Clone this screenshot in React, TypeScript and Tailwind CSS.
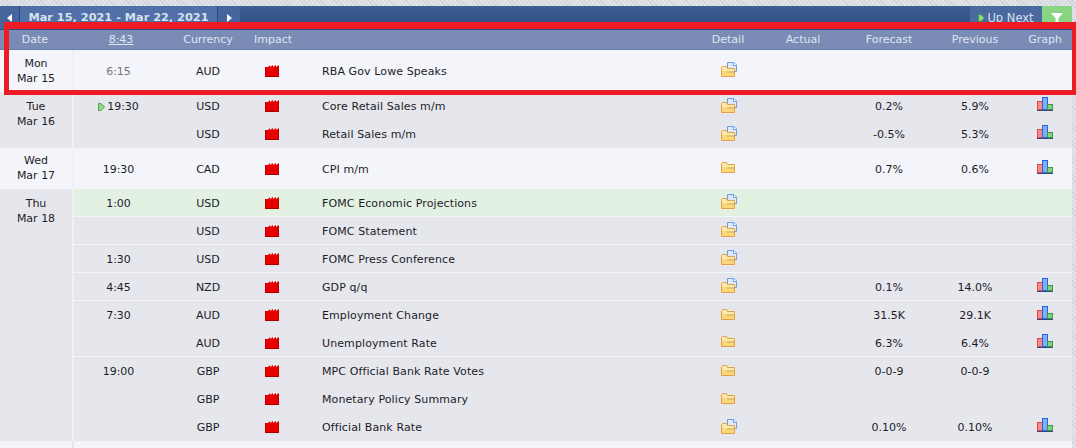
import React from 'react';

type Row = {
  time?: string;
  next?: boolean;
  muted?: boolean;
  cur: string;
  name: string;
  doc?: boolean;
  forecast?: string;
  previous?: string;
  graph?: boolean;
  line?: boolean;
  green?: boolean;
  tall?: boolean;
};

type Day = { day: string; date: string; light: boolean; pad: string; rows: Row[] };

const days: Day[] = [
  {
    day: 'Mon',
    date: 'Mar 15',
    light: true,
    pad: 'pt-[6px]',
    rows: [{ time: '6:15', muted: true, cur: 'AUD', name: 'RBA Gov Lowe Speaks', doc: true, tall: true }],
  },
  {
    day: 'Tue',
    date: 'Mar 16',
    light: false,
    pad: 'pt-[7px]',
    rows: [
      { time: '19:30', next: true, cur: 'USD', name: 'Core Retail Sales m/m', doc: true, forecast: '0.2%', previous: '5.9%', graph: true },
      { cur: 'USD', name: 'Retail Sales m/m', doc: true, forecast: '-0.5%', previous: '5.3%', graph: true },
    ],
  },
  {
    day: 'Wed',
    date: 'Mar 17',
    light: true,
    pad: 'pt-[5px]',
    rows: [{ time: '19:30', cur: 'CAD', name: 'CPI m/m', forecast: '0.7%', previous: '0.6%', graph: true, tall: true }],
  },
  {
    day: 'Thu',
    date: 'Mar 18',
    light: false,
    pad: 'pt-[7px]',
    rows: [
      { time: '1:00', cur: 'USD', name: 'FOMC Economic Projections', doc: true, green: true, line: true },
      { cur: 'USD', name: 'FOMC Statement', doc: true, line: true },
      { time: '1:30', cur: 'USD', name: 'FOMC Press Conference', doc: true, line: true },
      { time: '4:45', cur: 'NZD', name: 'GDP q/q', doc: true, forecast: '0.1%', previous: '14.0%', graph: true, line: true },
      { time: '7:30', cur: 'AUD', name: 'Employment Change', forecast: '31.5K', previous: '29.1K', graph: true },
      { cur: 'AUD', name: 'Unemployment Rate', forecast: '6.3%', previous: '6.4%', graph: true, line: true },
      { time: '19:00', cur: 'GBP', name: 'MPC Official Bank Rate Votes', forecast: '0-0-9', previous: '0-0-9' },
      { cur: 'GBP', name: 'Monetary Policy Summary' },
      { cur: 'GBP', name: 'Official Bank Rate', doc: true, forecast: '0.10%', previous: '0.10%', graph: true },
    ],
  },
];

const Impact = () => (
  <svg width="14" height="12" viewBox="0 0 14 12" className="block">
    <path d="M0 2V12H14V0L11 2V0L8 2V0L5 2V0L3 2H0Z" fill="#e60000" />
    <path d="M0 11h14v1H0z" fill="#a80000" />
    <path d="M0 2h1v10H0zM13 1h1v11h-1z" fill="#bc0000" />
  </svg>
);

const Folder = ({ doc }: { doc?: boolean }) => (
  <svg
    width="16"
    height={doc ? 15 : 11}
    viewBox={doc ? '0 0 16 15' : '0 4 16 11'}
    className="block"
  >
    {doc && (
      <>
        <path d="M6.5 .5H13L15.5 3V9.5H6.5Z" fill="#dbe8fb" stroke="#6f9fdc" />
        <path d="M12.5 .5V3.5H15.5" fill="#fff" stroke="#6f9fdc" />
      </>
    )}
    <path d="M.5 5.5V14.5H13.5V6.5H6.5L5.5 4.5H1.5Z" fill="#fbe9a8" stroke="#e3a048" />
    <path d="M1 9H13V14H1Z" fill="#f8d878" />
    <path d="M6 10h7" stroke="#d8a868" />
  </svg>
);

const Graph = () => (
  <svg width="16" height="14" viewBox="0 0 16 14" className="block">
    <rect x=".5" y="4.5" width="5" height="8" fill="#f58a8a" stroke="#e04848" />
    <rect x="5.5" y=".5" width="5" height="12" fill="#7fb0f5" stroke="#2a62e0" />
    <rect x="10.5" y="7.5" width="5" height="5" fill="#86d086" stroke="#3a9a3a" />
    <rect x="0" y="13" width="16" height="1" fill="#3a4a7a" />
  </svg>
);

const Play = ({ color = '#4aa84a' }: { color?: string }) => (
  <svg width="7" height="8" viewBox="0 0 7 8" className="block">
    <path d="M.5 .5H3L6.5 4L3 7.5H.5Z" fill="#8ed88e" stroke={color} />
  </svg>
);

function EventRow({ r }: { r: Row }) {
  const height = r.tall ? 'h-[41px]' : 'h-[28px]';
  const bg = r.green ? 'bg-[#e3f1e3]' : '';
  const line = r.line ? 'border-b border-[#f5f6fa]' : '';
  return (
    <div className={`flex items-center ${height} ${bg} ${line}`}>
      <div
        className={`flex w-[89px] items-center justify-center gap-[2px] pt-[2px] ${r.muted ? 'text-[#757575]' : 'text-[#1c1c28]'}`}
      >
        {r.next && <Play />}
        {r.time}
      </div>
      <div className="w-[90px] pt-[2px] text-center text-[#1c1c28]">{r.cur}</div>
      <div className="flex w-[38px] justify-center">
        <Impact />
      </div>
      <div className="flex-1 pl-[31px] pt-[2px] tracking-[0.1px] text-[#1c1c28]">{r.name}</div>
      <div className="flex w-[64px] justify-center pb-[2px] pl-[2px]">
        <Folder doc={r.doc} />
      </div>
      <div className="w-[86px]" />
      <div className="w-[86px] pt-[2px] text-center text-[#1c1c28]">{r.forecast}</div>
      <div className="w-[86px] pt-[2px] text-center text-[#1c1c28]">{r.previous}</div>
      <div className="flex w-[54px] justify-center pb-[4px]">{r.graph && <Graph />}</div>
    </div>
  );
}

export default function App() {
  return (
    <div
      className="relative h-[448px] w-[1076px] overflow-hidden bg-[repeating-linear-gradient(45deg,#cfd2d8_0px,#cfd2d8_1px,#e2e4e8_1px,#e2e4e8_3px)] pt-[6px] text-[11px] leading-[14px]"
      style={{ fontFamily: '"DejaVu Sans", Verdana, sans-serif' }}
    >
      <div className="h-[442px] w-[1072px] bg-[#f4f5fa]">
        {/* week nav */}
        <div className="flex h-[24px] items-start bg-gradient-to-b from-[#3f5f94] to-[#2c4a7c] text-[#d5e0f0]">
          <div className="flex h-[23px] w-[20px] items-center justify-center border-r border-[#2c4a7c] bg-[#46659c]">
            <span className="h-0 w-0 border-y-[4px] border-r-[5px] border-y-transparent border-r-white" />
          </div>
          <div className="relative flex h-[23px] w-[198px] items-center justify-center border-r border-[#2c4a7c] bg-[#5170a8] text-[11.3px] font-bold">
            Mar 15, 2021 - Mar 22, 2021
            <span className="absolute bottom-[1px] right-0 h-[2px] w-[11px] bg-[#3fae3f]" />
          </div>
          <div className="flex h-[23px] w-[22px] items-center justify-center bg-[#46659c]">
            <span className="h-0 w-0 border-y-[4px] border-l-[5px] border-y-transparent border-l-white" />
          </div>
          <div className="flex-1" />
          <div className="flex h-[23px] w-[72px] items-center justify-center gap-[2px] bg-[#4a6a9f] text-[11.5px]">
            <Play color="#3a9a3a" />
            Up Next
          </div>
          <div className="flex h-[23px] w-[30px] items-center justify-center bg-[#88d584]">
            <svg width="12" height="12" viewBox="0 0 12 12">
              <path d="M0 1H12L7.5 6V12H4.5V6Z" fill="#fff" />
            </svg>
          </div>
        </div>

        {/* column headers */}
        <div className="flex h-[20px] items-center border-b border-[#6a7da8] bg-[#7a8cb5] text-[#dfe6f2]">
          <div className="w-[70px] text-center">Date</div>
          <div className="w-[102px] text-center underline">8:43</div>
          <div className="w-[72px] text-center">Currency</div>
          <div className="w-[58px] text-center">Impact</div>
          <div className="flex-1" />
          <div className="w-[64px] text-center">Detail</div>
          <div className="w-[86px] text-center">Actual</div>
          <div className="w-[86px] text-center">Forecast</div>
          <div className="w-[86px] text-center">Previous</div>
          <div className="w-[54px] text-center">Graph</div>
        </div>

        {days.map((d) => (
          <div
            key={d.date}
            className={`flex ${d.light ? 'bg-[#f4f5fa]' : 'bg-[#e6e7ed]'} ${d.day === 'Mon' ? 'h-[42px]' : ''}`}
          >
            <div
              className={`w-[74px] shrink-0 border-r-2 border-[#f0f1f6] text-center leading-[15px] text-[#1c1c28] ${d.pad}`}
            >
              <div>{d.day}</div>
              <div>{d.date}</div>
            </div>
            <div className="flex-1">
              {d.rows.map((r) => (
                <EventRow key={r.name} r={r} />
              ))}
            </div>
          </div>
        ))}
        <div className="h-[8px] w-[74px] border-r-2 border-[#e6e7ed]" />
      </div>

      {/* red annotation box */}
      <div className="absolute left-[4px] top-[22px] h-[73px] w-[1073px] border-[5px] border-t-[7px] border-[#ed1c24]" />
    </div>
  );
}
